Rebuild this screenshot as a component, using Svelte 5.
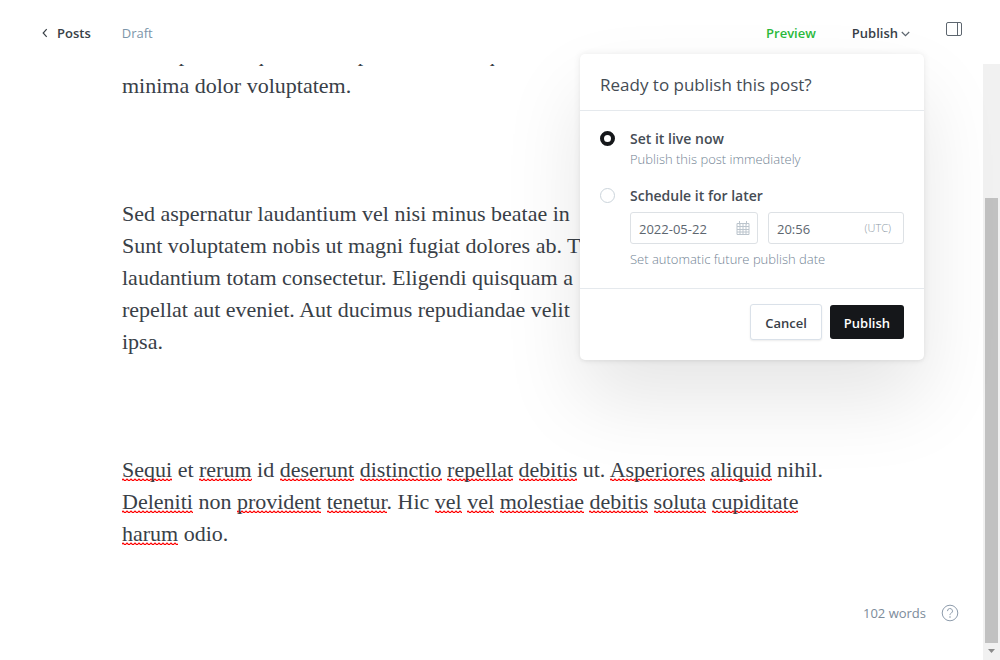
<script>
  let when = $state('now');
  let date = $state('2022-05-22');
  let time = $state('20:56');
</script>

<div class="editor">
  <header>
    <nav>
      <a class="back" href="#posts">
        <svg width="6" height="10" viewBox="0 0 6 10" aria-hidden="true"><path d="M4.7 1.2 1.2 5l3.5 3.8" /></svg>
        Posts
      </a>
      <span class="status">Draft</span>
    </nav>
    <div class="actions">
      <button class="link preview" type="button">Preview</button>
      <button class="link publish" type="button">
        Publish
        <svg width="9" height="8" viewBox="0 0 9 8" aria-hidden="true"><path d="M.8 3 4.5 6.7 8.2 3" /></svg>
      </button>
      <button class="link sidebar" type="button" aria-label="Settings">
        <svg width="16" height="14" viewBox="0 0 16 14" aria-hidden="true"><rect x=".5" y=".5" width="15" height="13" rx="1.5" /><path d="M11.5.5v13" /></svg>
      </button>
    </div>
  </header>

  <main>
    <article>
      <p>Natus pariatur quia dolore perferendis et quo aut<br />minima dolor voluptatem.</p>
      <p>
        Sed aspernatur laudantium vel nisi minus beatae in<br />
        Sunt voluptatem nobis ut magni fugiat dolores ab. T<br />
        laudantium totam consectetur. Eligendi quisquam a<br />
        repellat aut eveniet. Aut ducimus repudiandae velit<br />
        ipsa.
      </p>
      <p>
        <u>Sequi</u> et <u>rerum</u> id <u>deserunt</u> <u>distinctio</u> <u>repellat</u> <u>debitis</u> ut. <u>Asperiores</u> <u>aliquid</u> nihil.<br />
        <u>Deleniti</u> non <u>provident</u> <u>tenetur</u>. Hic <u>vel</u> <u>vel</u> <u>molestiae</u> <u>debitis</u> <u>soluta</u> <u>cupiditate</u><br />
        <u>harum</u> odio.
      </p>
    </article>
    <div class="scrollbar" aria-hidden="true">
      <div class="thumb"></div>
      <svg width="7" height="4" viewBox="0 0 7 4"><path d="M0 0h7L3.500 4z" /></svg>
    </div>
  </main>

  <div class="count">
    <span>102 words</span>
    <a href="#help" aria-label="Help">
      <svg width="18" height="18" viewBox="0 0 18 18" aria-hidden="true"><circle cx="9" cy="9" r="7.8" /><path d="M6.500 7.100a2.500 2.500 0 1 1 3.700 2.100c-.9.5-1.200.9-1.200 1.900" /><circle class="dot" cx="9" cy="13" r=".8" /></svg>
    </a>
  </div>

  <form class="menu" onsubmit={(e) => e.preventDefault()}>
    <h2>Ready to publish this post?</h2>
    <div class="options">
      <div class="option">
        <input id="now" type="radio" name="when" value="now" bind:group={when} />
        <div class="body">
          <label for="now">Set it live now</label>
          <p class="hint">Publish this post immediately</p>
        </div>
      </div>
      <div class="option">
        <input id="later" type="radio" name="when" value="later" bind:group={when} />
        <div class="body">
          <label for="later">Schedule it for later</label>
          <div class="fields">
            <div class="field date">
              <input type="text" aria-label="Publish date" bind:value={date} />
              <svg width="14" height="14" viewBox="0 0 14 14" aria-hidden="true"><path d="M1 2.500h12v11H1zM1 5.500h12M1 8.500h12M1 11h12M4 2.500v11M7 2.500v11M10 2.500v11M3.500 0v3.500M10.500 0v3.500" /></svg>
            </div>
            <div class="field time">
              <input type="text" aria-label="Publish time" bind:value={time} />
              <span>(UTC)</span>
            </div>
          </div>
          <p class="hint">Set automatic future publish date</p>
        </div>
      </div>
    </div>
    <footer>
      <button class="cancel" type="button">Cancel</button>
      <button class="confirm" type="submit">Publish</button>
    </footer>
  </form>
</div>

<style>
  :global(body) {
    margin: 0;
    background: #fff;
  }
  .editor {
    position: relative;
    display: flex;
    flex-direction: column;
    height: 100vh;
    overflow: hidden;
    font: 13px/20px 'Open Sans', 'Noto Sans', sans-serif;
    color: #394047;
  }
  .editor * {
    box-sizing: border-box;
  }
  svg {
    display: block;
    fill: none;
    stroke: currentColor;
  }
  button,
  input {
    margin: 0;
    font: inherit;
    color: inherit;
  }
  header {
    display: flex;
    flex: none;
    justify-content: space-between;
    height: 64px;
    padding: 23px 38px 0 42px;
  }
  nav,
  .actions {
    display: flex;
    align-items: flex-start;
  }
  nav {
    gap: 31px;
  }
  .back {
    display: flex;
    align-items: center;
    gap: 9px;
    color: #394047;
    font-weight: 600;
    text-decoration: none;
  }
  .back svg,
  .publish svg {
    stroke-width: 1.2;
  }
  .status {
    color: #7c95a9;
  }
  .link {
    display: flex;
    align-items: center;
    padding: 0;
    border: 0;
    background: none;
    font-weight: 600;
  }
  .actions {
    gap: 36px;
  }
  .preview {
    color: #2bba3c;
  }
  .publish {
    gap: 3px;
  }
  .publish svg {
    color: #5d666f;
  }
  .sidebar {
    height: 12px;
    color: #5d666f;
  }
  main {
    display: flex;
    flex: 1;
    min-height: 0;
    overflow: hidden;
  }
  article {
    display: flex;
    flex: 1;
    flex-direction: column;
    justify-content: flex-end;
    gap: 96px;
    padding: 0 122px 110px;
    font: 22px/32px 'Liberation Serif', serif;
    white-space: nowrap;
  }
  p {
    margin: 0;
  }
  u {
    background: url("data:image/svg+xml,%3Csvg xmlns='http://www.w3.org/2000/svg' width='4' height='3'%3E%3Cpath d='M-1 3 1 1l2 2 2-2' fill='none' stroke='red' stroke-width='1.2'/%3E%3C/svg%3E")
      repeat-x 0 calc(100% - 1px);
    text-decoration: none;
  }
  .scrollbar {
    display: flex;
    flex: none;
    flex-direction: column;
    align-items: center;
    gap: 6px;
    width: 17px;
    padding: 134px 0 7px;
    background: #f1f1f1;
  }
  .thumb {
    flex: 1;
    width: 13px;
    background: #c1c1c1;
  }
  .scrollbar svg {
    fill: #8b8b8b;
    stroke: none;
  }
  .count {
    position: absolute;
    right: 41px;
    bottom: 37px;
    display: flex;
    align-items: center;
    gap: 15px;
    color: #7c8b9a;
  }
  .count a {
    color: #8e9cac;
  }
  .count .dot {
    fill: currentColor;
    stroke: none;
  }
  .menu {
    position: absolute;
    top: 54px;
    right: 76px;
    width: 344px;
    border-radius: 5px;
    background: #fff;
    box-shadow:
      0 0 7px rgba(0, 0, 0, 0.08),
      0 2px 3px rgba(0, 0, 0, 0.03),
      0 40px 80px rgba(0, 0, 0, 0.1);
  }
  h2 {
    margin: 0;
    padding: 19px 20px 13px;
    border-bottom: 1px solid #e5e9ed;
    color: #454c54;
    font-size: 17px;
    font-weight: 400;
    line-height: 24px;
  }
  .options {
    display: flex;
    flex-direction: column;
    gap: 17px;
    padding: 18px 20px 19px;
  }
  .option {
    display: flex;
    gap: 15px;
  }
  .option > input {
    flex: none;
    width: 15px;
    height: 15px;
    margin-top: 2px;
    border: 1px solid #cbd4db;
    border-radius: 50%;
    appearance: none;
  }
  .option > input:checked {
    border: 4px solid #15171a;
  }
  .body {
    flex: 1;
    min-width: 0;
  }
  label {
    display: block;
    color: #454c54;
    font-size: 14px;
    font-weight: 600;
  }
  .hint {
    color: #728394;
    font-weight: 300;
  }
  .fields {
    display: flex;
    gap: 10px;
    margin: 6px 0 5px;
  }
  .field {
    display: flex;
    align-items: center;
    min-width: 0;
    height: 32px;
    padding: 0 8px;
    border: 1px solid #dde1e5;
    border-radius: 3px;
    color: #5d666f;
  }
  .date {
    width: 128px;
    padding-right: 7px;
  }
  .time {
    flex: 1;
    padding-right: 12px;
  }
  .field input {
    flex: 1;
    min-width: 0;
    width: 100%;
    padding: 1px 0 0;
    border: 0;
    outline: 0;
    background: none;
  }
  .field svg {
    color: #bcc5cd;
  }
  .field span {
    color: #8e9aa6;
    font-size: 11px;
    font-weight: 300;
  }
  footer {
    display: flex;
    align-items: center;
    justify-content: flex-end;
    gap: 8px;
    padding: 15px 20px 20px;
    border-top: 1px solid #e5e9ed;
  }
  footer button {
    height: 34px;
    padding: 2px 14px 0;
    border: 0;
    border-radius: 3px;
    font-weight: 600;
  }
  footer .cancel {
    height: 36px;
    border: 1px solid #dae1e9;
    background: #fff;
    box-shadow: 0 1px 2px rgba(0, 0, 0, 0.08);
  }
  .confirm {
    background: #15171a;
    color: #fff;
  }
</style>
